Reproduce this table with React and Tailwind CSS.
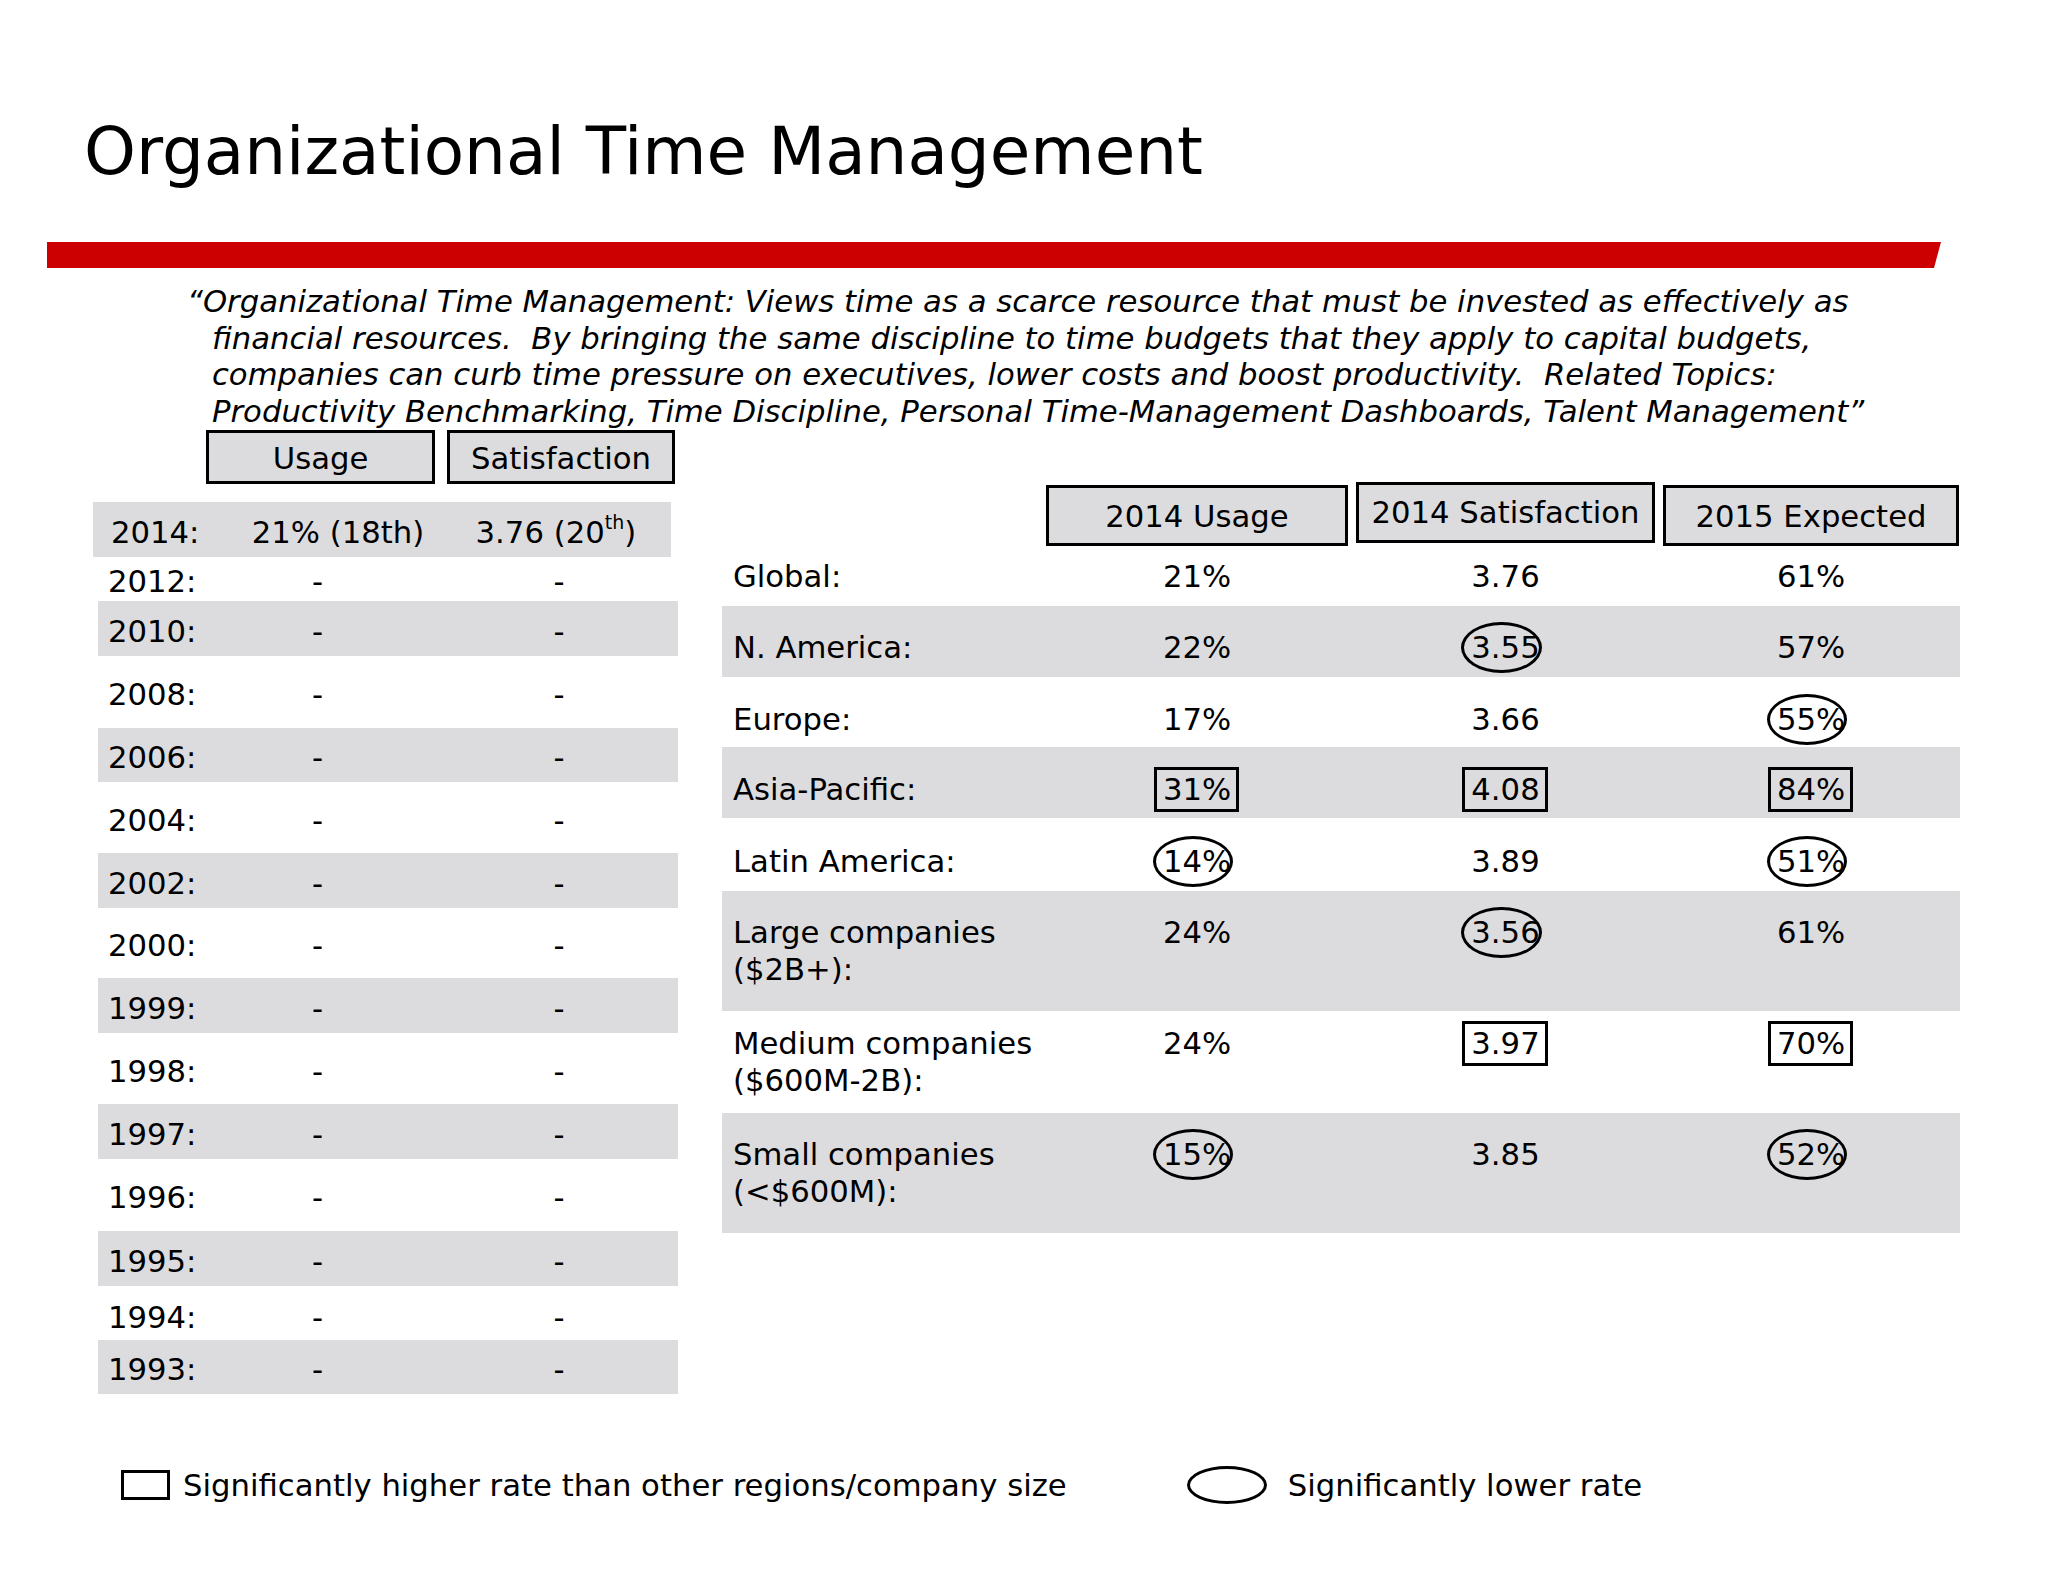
import React from 'react';

const history = [
  { year: '2014:', usage: '21% (18th)', sat: 'top', gray: true, h: 'h-[55px]' },
  { year: '2012:', h: 'h-[44px]' },
  { year: '2010:', gray: true, h: 'h-[55px]' },
  { year: '2008:', h: 'h-[72px]' },
  { year: '2006:', gray: true, h: 'h-[54px]' },
  { year: '2004:', h: 'h-[71px]' },
  { year: '2002:', gray: true, h: 'h-[55px]' },
  { year: '2000:', h: 'h-[70px]' },
  { year: '1999:', gray: true, h: 'h-[55px]' },
  { year: '1998:', h: 'h-[71px]' },
  { year: '1997:', gray: true, h: 'h-[55px]' },
  { year: '1996:', h: 'h-[72px]' },
  { year: '1995:', gray: true, h: 'h-[55px]' },
  { year: '1994:', h: 'h-[54px] pt-[9px]' },
  { year: '1993:', gray: true, h: 'h-[54px]' },
];

// mark: 'o' = significantly lower (ellipse), 'b' = significantly higher (box)
const regions = [
  { label: ['Global:'], vals: [['21%'], ['3.76'], ['61%']], h: 'h-[60px]', pt: 'pt-[12px]' },
  { label: ['N. America:'], vals: [['22%'], ['3.55', 'o'], ['57%']], gray: true, h: 'h-[71px]', pt: 'pt-[23px]' },
  { label: ['Europe:'], vals: [['17%'], ['3.66'], ['55%', 'o']], h: 'h-[70px]', pt: 'pt-[24px]' },
  { label: ['Asia-Pacific:'], vals: [['31%', 'b'], ['4.08', 'b'], ['84%', 'b']], gray: true, h: 'h-[71px]', pt: 'pt-[24px]' },
  { label: ['Latin America:'], vals: [['14%', 'o'], ['3.89'], ['51%', 'o']], h: 'h-[73px]', pt: 'pt-[25px]' },
  { label: ['Large companies', '($2B+):'], vals: [['24%'], ['3.56', 'o'], ['61%']], gray: true, h: 'h-[120px]', pt: 'pt-[23px]' },
  { label: ['Medium companies', '($600M-2B):'], vals: [['24%'], ['3.97', 'b'], ['70%', 'b']], h: 'h-[102px]', pt: 'pt-[14px]' },
  { label: ['Small companies', '(<$600M):'], vals: [['15%', 'o'], ['3.85'], ['52%', 'o']], gray: true, h: 'h-[120px]', pt: 'pt-[23px]' },
];

const colW = ['w-[302px]', 'w-[299px] ml-[8px]', 'w-[296px] ml-[8px]'];

function Mark({ text, mark }) {
  return (
    <span className="relative inline-block">
      {text}
      {mark === 'o' && (
        <span className="absolute left-[-10px] right-[-2px] top-[-7px] bottom-[-7px] rounded-[50%] border-[3.5px] border-black" />
      )}
      {mark === 'b' && (
        <span className="absolute left-[-9px] right-[-8px] top-[-4px] bottom-[-4px] border-[3.5px] border-black" />
      )}
    </span>
  );
}

function HeadBox({ children, className }) {
  return (
    <div className={`flex items-center justify-center border-[3px] border-black bg-[#dcdcde] ${className}`}>
      {children}
    </div>
  );
}

export default function App() {
  return (
    <div className="w-[2048px] h-[1582px] bg-white text-black font-['DejaVu_Sans',sans-serif] text-[30.7px] leading-[37px]">
      <h1 className="pt-[112px] pl-[84px] text-[66px] leading-[79px]">Organizational Time Management</h1>

      <div className="mt-[51px] ml-[47px] w-[1894px] h-[26px] bg-[#cc0000] [clip-path:polygon(0_0,100%_0,calc(100%-7px)_100%,0_100%)]" />

      <div className="mt-[16px] italic leading-[36.6px] whitespace-pre">
        <div className="pl-[187px]">“Organizational Time Management: Views time as a scarce resource that must be invested as effectively as</div>
        <div className="pl-[212px]">financial resources.  By bringing the same discipline to time budgets that they apply to capital budgets,</div>
        <div className="pl-[212px]">companies can curb time pressure on executives, lower costs and boost productivity.  Related Topics:</div>
        <div className="pl-[212px]">Productivity Benchmarking, Time Discipline, Personal Time-Management Dashboards, Talent Management”</div>
      </div>

      <div className="flex items-start">
        {/* history table */}
        <div className="ml-[93px] w-[585px] flex flex-col">
          <div className="flex ml-[113px]">
            <HeadBox className="w-[229px] h-[54px] pt-[2px]">Usage</HeadBox>
            <HeadBox className="w-[228px] h-[54px] ml-[12px] pt-[2px]">Satisfaction</HeadBox>
          </div>
          <div className="mt-[18px]">
            {history.map((r, i) => {
              const first = i === 0;
              return (
                <div
                  key={r.year}
                  className={`flex items-center pt-[5px] ${r.h} ${r.gray ? 'bg-[#dcdcdf]' : ''} ${first ? 'w-[578px]' : 'ml-[5px] w-[580px]'}`}
                >
                  <div className={first ? 'w-[113px] pl-[18px]' : 'w-[108px] pl-[10px]'}>{r.year}</div>
                  <div className={`w-[229px] text-center ${first ? 'pl-[38px]' : 'pr-[6px]'}`}>{r.usage || '-'}</div>
                  <div className="w-[228px] ml-[12px] text-center pr-[4px]">
                    {r.sat === 'top' ? (
                      <span>3.76 (20<sup className="text-[19px] top-[-0.75em]">th</sup>)</span>
                    ) : (
                      '-'
                    )}
                  </div>
                </div>
              );
            })}
          </div>
        </div>

        {/* region table */}
        <div className="ml-[44px] mt-[55px] w-[1238px] flex flex-col">
          <div className="flex">
            <div className="w-[324px]" />
            <HeadBox className="w-[302px] h-[61px] pt-[2px]">2014 Usage</HeadBox>
            <HeadBox className="w-[299px] h-[61px] ml-[8px] mt-[-3px] mb-[3px]">2014 Satisfaction</HeadBox>
            <HeadBox className="w-[296px] h-[61px] ml-[8px] pt-[2px]">2015 Expected</HeadBox>
          </div>
          {regions.map((r) => (
            <div key={r.label[0]} className={`flex items-start ${r.h} ${r.pt} ${r.gray ? 'bg-[#dcdcdf]' : ''}`}>
              <div className="w-[324px] pl-[11px]">
                {r.label.map((l) => (
                  <div key={l}>{l}</div>
                ))}
              </div>
              {r.vals.map(([v, m], j) => (
                <div key={j} className={`${colW[j]} text-center`}>
                  <Mark text={v} mark={m} />
                </div>
              ))}
            </div>
          ))}
        </div>
      </div>

      <div className="mt-[72px] flex items-center h-[38px]">
        <div className="ml-[121px] w-[49px] h-[30px] border-[3.5px] border-black" />
        <div className="ml-[13px]">Significantly higher rate than other regions/company size</div>
        <div className="ml-[120px] w-[80px] h-[38px] rounded-[50%] border-[3.5px] border-black" />
        <div className="ml-[21px]">Significantly lower rate</div>
      </div>
    </div>
  );
}
